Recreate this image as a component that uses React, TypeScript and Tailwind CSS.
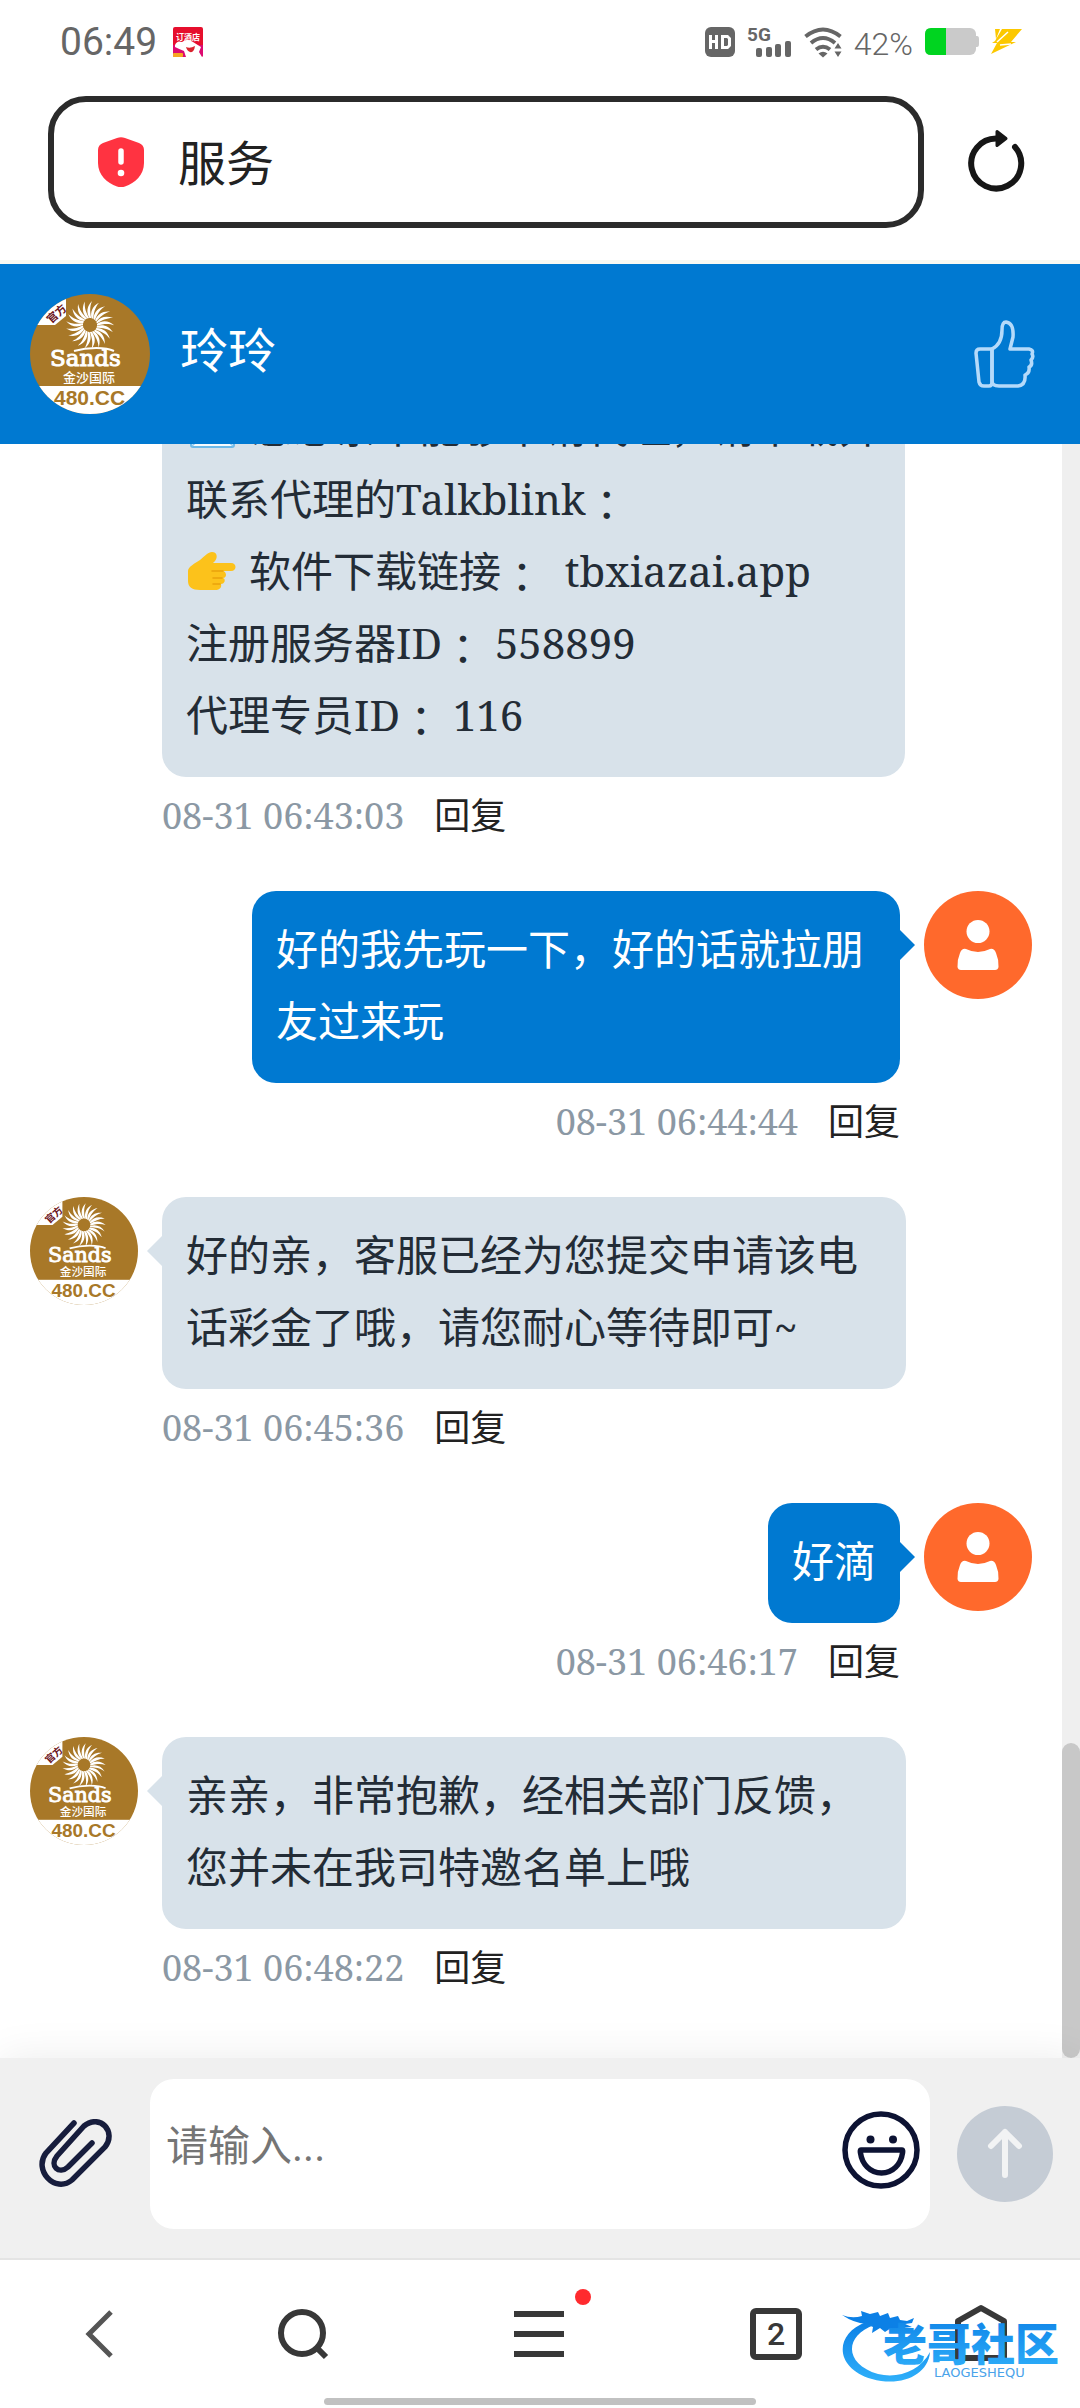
import type { ReactNode } from "react";
import clsx from "clsx";

const RAYS = Array.from({ length: 21 }, (_, i) => (i * 360) / 21);

const AgentAvatar = ({ className }: { className: string }) => (
  <svg viewBox="0 0 120 120" className={className} role="img" aria-label="客服头像">
    <defs>
      <clipPath id="avatar-circle">
        <circle cx="60" cy="60" r="60" />
      </clipPath>
    </defs>
    <g clipPath="url(#avatar-circle)">
      <rect width="120" height="120" fill="#a87828" />
      <path d="M0 31H25L36 22V0H0Z" fill="#fff" />
      <text
        x="21"
        y="30"
        transform="rotate(-42 21 30)"
        className="font-['Noto_Sans_CJK_SC',sans-serif] text-[11px] font-bold"
        fill="#6b1420"
      >
        官方
      </text>
      {RAYS.map((angle) => (
        <path
          key={angle}
          d="M59.400 24C56 18 57 12 62 7C59.500 13 60 18 61.200 24Z"
          fill="#fff"
          transform={`rotate(${angle} 60 31)`}
        />
      ))}
      <text x="20" y="72" className="font-['DejaVu_Serif',serif] text-[23px]" fill="#fff" stroke="#fff">
        Sands
      </text>
      <path d="M44 57C58 53 76 53 84 57" fill="none" stroke="#fff" strokeWidth="2" />
      <text x="33" y="88" className="font-['Noto_Sans_CJK_SC',sans-serif] text-[13px] font-medium" fill="#fff">
        金沙国际
      </text>
      <rect y="92" width="120" height="28" fill="#fff" />
      <text x="24" y="111" className="font-['Liberation_Sans',sans-serif] text-[21px] font-bold" fill="#a87828">
        480.CC
      </text>
    </g>
  </svg>
);

const UserAvatar = () => (
  <svg viewBox="0 0 108 108" className="size-27 shrink-0" role="img" aria-label="我的头像">
    <circle cx="54" cy="54" r="54" fill="#ff692c" />
    <circle cx="54" cy="40.500" r="11.500" fill="#fff" />
    <path
      d="M42 58Q54 64 66 58Q70 57 72 62Q75 69 74.500 76Q74 79 71 79H37Q34 79 33.500 76Q33 69 36 62Q38 57 42 58Z"
      fill="#fff"
    />
  </svg>
);

const PointingHand = () => (
  <svg viewBox="0 0 52 42" className="inline-block h-[42px] w-[52px] align-[-6px]" aria-label="👉" role="img">
    <path
      d="M2 20C2 16 9 12 14 9C19 5 22 1 26 1C31 1 32 6 29 10L27 12H45C51 12 51 20 45 20H37C41 21 41 27 37 27C40 28 39 33 35 33C36 37 33 39 29 39H14C6 39 2 36 2 30Z"
      fill="#fcc21b"
    />
    <path d="M37 20H26M36 27H27M34 33H27" fill="none" stroke="#e9a20c" strokeWidth="1.500" strokeLinecap="round" />
  </svg>
);

const Envelope = () => (
  <svg viewBox="0 0 54 42" className="inline-block h-[42px] w-[54px] align-[-6px]" aria-hidden="true">
    <rect x="5" y="4" width="43" height="36" rx="2" fill="#f7fbfe" stroke="#6db9e8" strokeWidth="2" />
    <path d="M6 39L21 24M47 39L32 24M6 6L26 28L47 6" fill="none" stroke="#8fc9ee" strokeWidth="1.500" />
  </svg>
);

// Full-width colon that sits in the middle of its cell
const Colon = () => (
  <span className="align-[-6px] font-['Noto_Sans_CJK_TC',sans-serif] leading-none">：</span>
);

interface MessageProps {
  mine?: boolean;
  // follows straight on from text further up, so no avatar beside it
  continued?: boolean;
  time: string;
  children: ReactNode;
}

const Message = ({ mine, continued, time, children }: MessageProps) => (
  <article className={clsx("flex shrink-0 items-start gap-6", mine ? "flex-row-reverse" : "flex-row")}>
    {continued && <div className="w-27 shrink-0" />}
    {!continued && (mine ? <UserAvatar /> : <AgentAvatar className="size-27 shrink-0" />)}
    <div className={clsx("flex min-w-0 flex-col", mine ? "max-w-[648px] items-end" : "max-w-[744px] items-start")}>
      <div
        className={clsx(
          "relative rounded-3xl px-6 pt-[22px] pb-[26px] text-[42px] leading-[72px]",
          mine ? "bg-[#0079d1] text-white" : "bg-[#d8e2ea] text-[#232c36]"
        )}
      >
        {!continued && (
          <span
            className={clsx(
              "absolute top-[39px] h-[30px] w-[15px]",
              mine
                ? "left-full bg-[#0079d1] [clip-path:polygon(0_0,100%_50%,0_100%)]"
                : "right-full bg-[#d8e2ea] [clip-path:polygon(100%_0,0_50%,100%_100%)]"
            )}
          />
        )}
        {children}
      </div>
      <div className="mt-3 flex items-center gap-[30px] leading-[54px]">
        <time className="text-[36px] text-[#8b98a4]">{time}</time>
        <button type="button" className="text-[36px] text-[#222]">
          回复
        </button>
      </div>
    </div>
  </article>
);

const StatusBar = () => (
  <div className="flex h-21 items-center justify-between pr-[57px] pl-[60px] text-[#666]">
    <div className="flex items-center gap-4">
      <span className="font-[Roboto,sans-serif] text-[39px]">06:49</span>
      <svg viewBox="0 0 30 30" className="size-[30px]" aria-hidden="true">
        <rect width="30" height="30" rx="2" fill="#e60f2d" />
        <path d="M0 18H30V28Q30 30 28 30H2Q0 30 0 28Z" fill="#dd0a70" />
        <text x="3" y="13" className="font-['Noto_Sans_CJK_SC',sans-serif] text-[8px] font-bold" fill="#fff">
          订酒店
        </text>
        <path d="M2 18Q4 13 9 15Q14 11 20 15L28 20L26 25L29 30H13L11 24Q6 22 2 20Z" fill="#fff" />
        <path d="M13 20Q17 22 22 19Q21 26 17 25Q14 24 13 20Z" fill="#d9232e" />
        <rect y="26" width="10" height="4" rx="1" fill="#f5a623" />
      </svg>
    </div>
    <div className="flex items-center gap-3">
      <svg viewBox="0 0 30 30" className="size-[30px]" aria-label="HD">
        <rect width="30" height="30" rx="6" fill="#666" />
        <path d="M4 8H7V13H10V8H13V22H10V16H7V22H4Z M16 8H23L26 11V19L23 22H16Z M19 11V19H22L23 18V12L22 11Z" fill="#fff" fillRule="evenodd" />
      </svg>
      <svg viewBox="0 0 45 32" className="h-8 w-[45px] overflow-visible" aria-label="5G">
        <text x="0" y="15" className="font-[Roboto,sans-serif] text-[19px] font-bold" fill="#666">
          5G
        </text>
        <rect x="9" y="22" width="6" height="9" rx="2" fill="#666" />
        <rect x="19" y="21" width="6" height="10" rx="2" fill="#666" />
        <rect x="28" y="18" width="6" height="13" rx="2" fill="#666" />
        <rect x="38" y="15" width="6" height="16" rx="2" fill="#666" />
      </svg>
      <svg viewBox="0 0 38 32" className="h-8 w-[38px]" aria-label="Wi-Fi">
        <g fill="none" stroke="#666" strokeWidth="4">
          <path d="M1.500 10.500Q19 -3.500 36.500 10.500" />
          <path d="M7 17Q19 7 31 17" />
          <path d="M12 23.500Q19 18 26 23.500" />
        </g>
        <path d="M14.500 27.500Q19 24 23.500 27.500L19 31.500Z" fill="#666" />
        <path d="M34 17L37.500 22.500H30.500ZM34 31L37.500 25.500H30.500Z" fill="#666" />
      </svg>
      <span className="pt-1 font-[Roboto,sans-serif] text-[32px] leading-9 font-light">42%</span>
      <svg viewBox="0 0 54 28" className="h-7 w-[54px]" aria-hidden="true">
        <rect width="51" height="27" rx="6" fill="#cacaca" />
        <path d="M50 8H52Q54 8 54 11V16Q54 19 52 19H50Z" fill="#cacaca" />
        <path d="M6 0H21V27H6Q0 27 0 21V6Q0 0 6 0Z" fill="#00d420" />
      </svg>
      <svg viewBox="0 0 32 26" className="h-[26px] w-8" aria-hidden="true">
        <path d="M4 0H9L5 10ZM11 0H31L20 13H25L0 25L6 14H1L4 12Z" fill="#fcc800" />
        <path d="M17 3L6 13M20 15L9 16" stroke="#fff" strokeWidth="1.500" />
      </svg>
    </div>
  </div>
);

const AddressBar = () => (
  <div className="flex items-center gap-10 border-b-4 border-[#f8f9f3] pt-3 pr-[52px] pb-8 pl-12">
    <div className="flex h-[132px] flex-1 items-center gap-[34px] rounded-[38px] border-[6px] border-[#2b2b2b] px-11">
      <svg viewBox="0 0 46 50" className="h-[50px] w-[46px] shrink-0" aria-hidden="true">
        <path
          d="M19 1Q23 -0.500 27 1L41 6Q46 8 46 13V26C46 38 37 46 27 49.500Q23 51 19 49.500C9 46 0 38 0 26V13Q0 8 5 6Z"
          fill="#ff3341"
        />
        <path d="M23 14V25" stroke="#fff" strokeWidth="5.500" strokeLinecap="round" />
        <circle cx="23" cy="36" r="3.300" fill="#fff" />
      </svg>
      <input
        aria-label="地址栏"
        defaultValue="服务"
        className="min-w-0 flex-1 bg-transparent pb-1 font-['Noto_Sans_CJK_SC',sans-serif] text-[48px] text-[#222] outline-none"
      />
    </div>
    <button type="button" aria-label="刷新">
      <svg viewBox="0 0 64 64" className="size-16" aria-hidden="true">
        <path d="M33 8.500A25 25 0 1 0 51 17" fill="none" stroke="#161616" strokeWidth="6" strokeLinecap="round" />
        <path d="M33 1.500L42 8.500L33 15.500Z" fill="#161616" stroke="#161616" strokeWidth="3" strokeLinejoin="round" />
      </svg>
    </button>
  </div>
);

const ChatHeader = () => (
  <header className="flex h-45 items-center gap-[30px] bg-[#0079d1] pr-[42px] pl-[30px]">
    <AgentAvatar className="size-30 shrink-0" />
    <h1 className="flex-1 pb-2 text-[48px] leading-[60px] text-white">玲玲</h1>
    <button type="button" aria-label="点赞">
      <svg viewBox="0 0 66 70" className="h-[70px] w-[66px]" fill="none" stroke="#b5dafa" strokeWidth="3.500" strokeLinejoin="round" aria-hidden="true">
        <path d="M20 30H8Q4 30 4 34L7 63Q8 67 12 67H17Q20 67 20 63Z" />
        <path d="M20 30Q30 25 30 11Q30 3 34 3Q42 4 41 18L38 30H57Q62 31 60 35Q62 38 59 41Q61 46 57 48Q58 54 53 56Q54 66 46 67H27Q20 67 20 62Z" />
      </svg>
    </button>
  </header>
);

const Composer = () => (
  <form className="relative flex items-center bg-[#f0f0f0] pt-[21px] pb-[29px] shadow-[0_0_40px_rgba(0,0,0,0.08)]">
    <button type="button" aria-label="添加附件" className="flex w-[150px] justify-center">
      <svg viewBox="0 0 76 70" className="h-[70px] w-[76px]" fill="none" stroke="#171d3d" strokeWidth="5.500" strokeLinecap="round" aria-hidden="true">
        <path d="M37 4L9 34C-4 51 18 75 35 61L68 28C80 13 63 -6 47 7L20 37C12 47 22 56 31 48L55 24" />
      </svg>
    </button>
    <div className="flex h-[150px] flex-1 items-start rounded-3xl bg-white pr-[10px] pl-4">
      <textarea
        aria-label="消息"
        placeholder="请输入..."
        className="h-full min-w-0 flex-1 resize-none bg-transparent pt-[38px] font-[Roboto,'Noto_Sans_CJK_SC',sans-serif] text-[42px] leading-[60px] outline-none placeholder:text-[#757575]"
      />
      <button type="button" aria-label="表情" className="mt-8">
        <svg viewBox="0 0 78 78" className="size-[78px]" fill="none" stroke="#0d1333" strokeWidth="5.500" aria-hidden="true">
          <circle cx="39" cy="39" r="36" />
          <path d="M19 39H60Q61 39 60.500 42C59 53 51 62 39.500 62S20 53 18.500 42Q18 39 19 39Z" />
          <circle cx="28.500" cy="28.500" r="4" fill="#0d1333" stroke="none" />
          <circle cx="51" cy="28.500" r="4" fill="#0d1333" stroke="none" />
        </svg>
      </button>
    </div>
    <div className="flex w-[150px] justify-center">
      <button type="submit" aria-label="发送" className="flex size-24 items-center justify-center rounded-full bg-[#c5ccd5]">
        <svg viewBox="0 0 40 52" className="h-[52px] w-10" fill="none" stroke="#f2f3f4" strokeWidth="6" strokeLinecap="round" strokeLinejoin="round" aria-hidden="true">
          <path d="M20 47V4M6 18L20 4L34 18" />
        </svg>
      </button>
    </div>
  </form>
);

const Watermark = () => (
  <div className="pointer-events-none absolute right-[14px] bottom-6">
    <svg viewBox="0 0 224 74" className="h-[74px] w-56" aria-label="老哥社区 LAOGESHEQU">
      <defs>
        <linearGradient id="wm" x1="0" y1="0" x2="0" y2="1">
          <stop offset="0" stopColor="#0c80e6" />
          <stop offset="1" stopColor="#2fb0fa" />
        </linearGradient>
      </defs>
      {/* dragon head, then the tail as a thinning arc */}
      <path
        d="M0 5Q10 9 20 6L19 1L28 4L36 2L38 6L46 3L48 8L56 6L58 10L65 11L72 8L70 13L63 14L70 17L60 18L54 22L49 18L43 22L38 18L30 23L31 17L24 14Q12 13 0 5Z"
        fill="#0c80e6"
      />
      <path d="M24 12C-8 24 -8 58 30 69C58 77 86 66 88 42C78 61 56 69 36 64C2 54 2 26 32 15Z" fill="url(#wm)" />
      <text x="41" y="51" className="font-['Noto_Sans_CJK_SC',sans-serif] text-[44px] font-black" fill="url(#wm)">
        老哥社区
      </text>
      <text x="92" y="67" className="font-['DejaVu_Sans',sans-serif] text-[13px]" fill="#4aa3ea">
        LAOGESHEQU
      </text>
    </svg>
  </div>
);

const BrowserNav = () => (
  <nav className="relative grid h-[150px] grid-cols-[198fr_210fr_262fr_212fr_198fr] items-center justify-items-center border-t-2 border-[#e4e4e4] bg-white">
    <button type="button" aria-label="后退">
      <svg viewBox="0 0 28 48" className="h-12 w-7" fill="none" stroke="#555" strokeWidth="5" aria-hidden="true">
        <path d="M26 2L4 24L26 46" />
      </svg>
    </button>
    <button type="button" aria-label="搜索">
      <svg viewBox="0 0 52 52" className="size-13" fill="none" stroke="#383838" strokeWidth="6" aria-hidden="true">
        <circle cx="25" cy="25" r="21" />
        <path d="M40 40L49 49" />
      </svg>
    </button>
    <button type="button" aria-label="菜单" className="relative">
      <svg viewBox="0 0 50 46" className="h-[46px] w-[50px]" stroke="#383838" strokeWidth="6" aria-hidden="true">
        <path d="M0 3H50M0 23H50M0 43H50" />
      </svg>
      <span className="absolute -top-[22px] left-[61px] size-4 rounded-full bg-[#ff2a2e]" />
    </button>
    <button
      type="button"
      aria-label="2 个标签页"
      className="flex size-13 items-center justify-center rounded-md border-[6px] border-[#383838] font-[Roboto,sans-serif] text-[32px] leading-none font-medium text-[#383838]"
    >
      2
    </button>
    <button type="button" aria-label="主页">
      <svg viewBox="0 0 52 60" className="h-15 w-13" fill="none" stroke="#383838" strokeWidth="6" strokeLinejoin="round" aria-hidden="true">
        <path d="M3 54V17L26 4L49 17V54Z" />
      </svg>
    </button>
    <Watermark />
    <span className="absolute bottom-[3px] left-[30%] h-[7px] w-[40%] rounded-full bg-[#c1c1c1]" />
  </nav>
);

export default function App() {
  return (
    <div className="flex h-screen flex-col bg-white font-['Noto_Serif','DejaVu_Serif_Condensed','Noto_Sans_CJK_SC',serif]">
      <StatusBar />
      <AddressBar />
      <ChatHeader />
      <main className="flex min-h-0 flex-1">
        <section className="flex min-w-0 flex-1 flex-col justify-end gap-12 overflow-hidden pr-[30px] pb-[63px] pl-[30px]">
          <Message continued time="08-31 06:43:03">
            <p className="whitespace-nowrap">
              <Envelope />
              {"\u00a0"}您想亲不能够申请代理，请下载并
            </p>
            <p>
              联系代理的Talkblink
              <Colon />
            </p>
            <p>
              <PointingHand />
              {"\u00a0"}软件下载链接
              <Colon />
              {"\u00a0\u00a0"}tbxiazai.app
            </p>
            <p>
              注册服务器ID
              <Colon />
              {"\u00a0"}558899
            </p>
            <p>
              代理专员ID
              <Colon />
              {"\u00a0"}116
            </p>
          </Message>
          <Message mine time="08-31 06:44:44">
            好的我先玩一下，好的话就拉朋友过来玩
          </Message>
          <Message time="08-31 06:45:36">好的亲，客服已经为您提交申请该电话彩金了哦，请您耐心等待即可~</Message>
          <Message mine time="08-31 06:46:17">
            好滴
          </Message>
          <Message time="08-31 06:48:22">亲亲，非常抱歉，经相关部门反馈，您并未在我司特邀名单上哦</Message>
        </section>
        <div className="flex w-[18px] flex-col justify-end bg-[#efefef]">
          <div className="h-[315px] rounded-full bg-[#c8c8c8]" />
        </div>
      </main>
      <Composer />
      <BrowserNav />
    </div>
  );
}
